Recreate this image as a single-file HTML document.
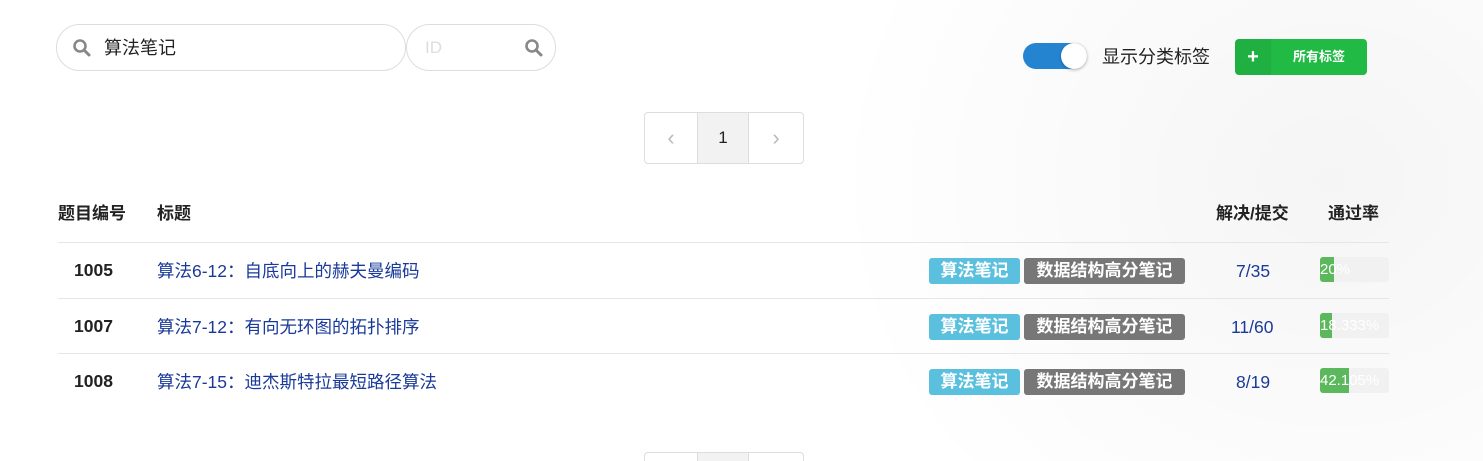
<!DOCTYPE html>
<html><head><meta charset="utf-8"><style>
*{box-sizing:border-box;margin:0;padding:0}
html,body{width:1483px;height:461px;overflow:hidden}
body{background:#fff radial-gradient(ellipse 500px 450px at 1330px 180px,rgba(0,0,0,0.04),rgba(0,0,0,0));font-family:"Liberation Sans","Noto Sans CJK SC",sans-serif;position:relative;color:#222}
.abs{position:absolute}
.inp{border:1px solid #ddd;border-radius:24px;height:47px;top:24px}
.tag{position:absolute;height:26px;line-height:26px;color:#fff;font-weight:bold;font-size:17px;border-radius:3px;text-align:center}
.row{position:absolute;left:58px;width:1331px;border-top:1px solid #e6e6e6}
.t{position:absolute;font-size:17.5px;line-height:20px;color:#1a3a9a}
.n{position:absolute;font-size:17.5px;line-height:20px;font-weight:bold}
.h{position:absolute;font-size:17px;line-height:20px;font-weight:bold;top:204px}
.bar{position:absolute;left:1320px;width:69px;height:25px;background:#f1f1f1;border-radius:3px;overflow:hidden;font-size:15px;color:#fff;line-height:25px}
.bar i{position:absolute;left:0;top:0;bottom:0;background:#5cb85c}
.bar span{position:relative}
</style></head><body>
<div class="abs inp" style="left:56px;width:350px"></div>
<svg class="abs" style="left:72px;top:38px" width="20" height="20" viewBox="0 0 20 20"><circle cx="8" cy="8" r="5.5" fill="none" stroke="#888" stroke-width="2.6"/><path d="M12 12l5 5" stroke="#888" stroke-width="3" stroke-linecap="round"/></svg>
<div class="abs" style="left:104px;top:37px;font-size:18px;line-height:22px;color:#222">算法笔记</div>
<div class="abs inp" style="left:406px;width:150px"></div>
<div class="abs" style="left:425px;top:37px;font-size:17px;line-height:22px;color:#ddd">ID</div>
<svg class="abs" style="left:524px;top:38px" width="20" height="20" viewBox="0 0 20 20"><circle cx="8" cy="8" r="5.5" fill="none" stroke="#888" stroke-width="2.6"/><path d="M12 12l5 5" stroke="#888" stroke-width="3" stroke-linecap="round"/></svg>
<div class="abs" style="left:1023px;top:43px;width:64px;height:26px;border-radius:13px;background:#2584d0"></div>
<div class="abs" style="left:1061px;top:43px;width:26px;height:26px;border-radius:13px;background:#fff;box-shadow:0 1px 3px rgba(0,0,0,.3)"></div>
<div class="abs" style="left:1102px;top:46px;font-size:18px;line-height:22px;color:#222">显示分类标签</div>
<div class="abs" style="left:1235px;top:39px;width:132px;height:36px;background:#21ba45;border-radius:4px"></div>
<div class="abs" style="left:1235px;top:39px;width:36px;height:36px;background:rgba(0,0,0,.05);border-radius:4px 0 0 4px;color:#fff;font-weight:bold;font-size:20px;text-align:center;line-height:36px">+</div>
<div class="abs" style="left:1271px;top:39px;width:96px;line-height:36px;text-align:center;color:#fff;font-weight:bold;font-size:13px">所有标签</div>
<div class="abs" style="left:644px;top:112px;width:160px;height:52px;border:1px solid #ddd;border-radius:4px;overflow:hidden">
<div class="abs" style="left:52px;top:0;width:52px;height:52px;background:#f2f2f2;border-left:1px solid #ddd;border-right:1px solid #ddd;text-align:center;line-height:50px;font-size:17px">1</div>
<div class="abs" style="left:0;width:52px;text-align:center;line-height:50px;font-size:22px;color:#bbb">‹</div>
<div class="abs" style="left:104px;width:54px;text-align:center;line-height:50px;font-size:22px;color:#bbb">›</div></div>
<div class="abs" style="left:644px;top:452px;width:160px;height:9px;border:1px solid #ddd;border-bottom:none;border-radius:4px 4px 0 0"><div class="abs" style="left:52px;top:0;width:52px;height:8px;background:#f2f2f2;border-left:1px solid #ddd;border-right:1px solid #ddd"></div></div>
<div class="h" style="left:58px">题目编号</div>
<div class="h" style="left:157px">标题</div>
<div class="h" style="left:1216px">解决/提交</div>
<div class="h" style="left:1328px">通过率</div>
<div class="row" style="top:242px"></div><div class="row" style="top:298px"></div><div class="row" style="top:353px"></div>

<div class="n" style="left:74px;top:260px">1005</div>
<div class="t" style="left:157px;top:261px">算法6-12：自底向上的赫夫曼编码</div>
<div class="tag" style="left:929px;top:258px;width:91px;background:#5bc0de">算法笔记</div>
<div class="tag" style="left:1024px;top:258px;width:161px;background:#777">数据结构高分笔记</div>
<div class="t" style="left:1236px;top:261px">7/35</div>
<div class="bar" style="top:257px"><i style="width:14px"></i><span>20%</span></div>

<div class="n" style="left:74px;top:316px">1007</div>
<div class="t" style="left:157px;top:317px">算法7-12：有向无环图的拓扑排序</div>
<div class="tag" style="left:929px;top:314px;width:91px;background:#5bc0de">算法笔记</div>
<div class="tag" style="left:1024px;top:314px;width:161px;background:#777">数据结构高分笔记</div>
<div class="t" style="left:1231px;top:317px">11/60</div>
<div class="bar" style="top:313px"><i style="width:12px"></i><span>18.333%</span></div>

<div class="n" style="left:74px;top:371px">1008</div>
<div class="t" style="left:157px;top:372px">算法7-15：迪杰斯特拉最短路径算法</div>
<div class="tag" style="left:929px;top:369px;width:91px;background:#5bc0de">算法笔记</div>
<div class="tag" style="left:1024px;top:369px;width:161px;background:#777">数据结构高分笔记</div>
<div class="t" style="left:1236px;top:372px">8/19</div>
<div class="bar" style="top:368px"><i style="width:29px"></i><span>42.105%</span></div>
</body></html>
